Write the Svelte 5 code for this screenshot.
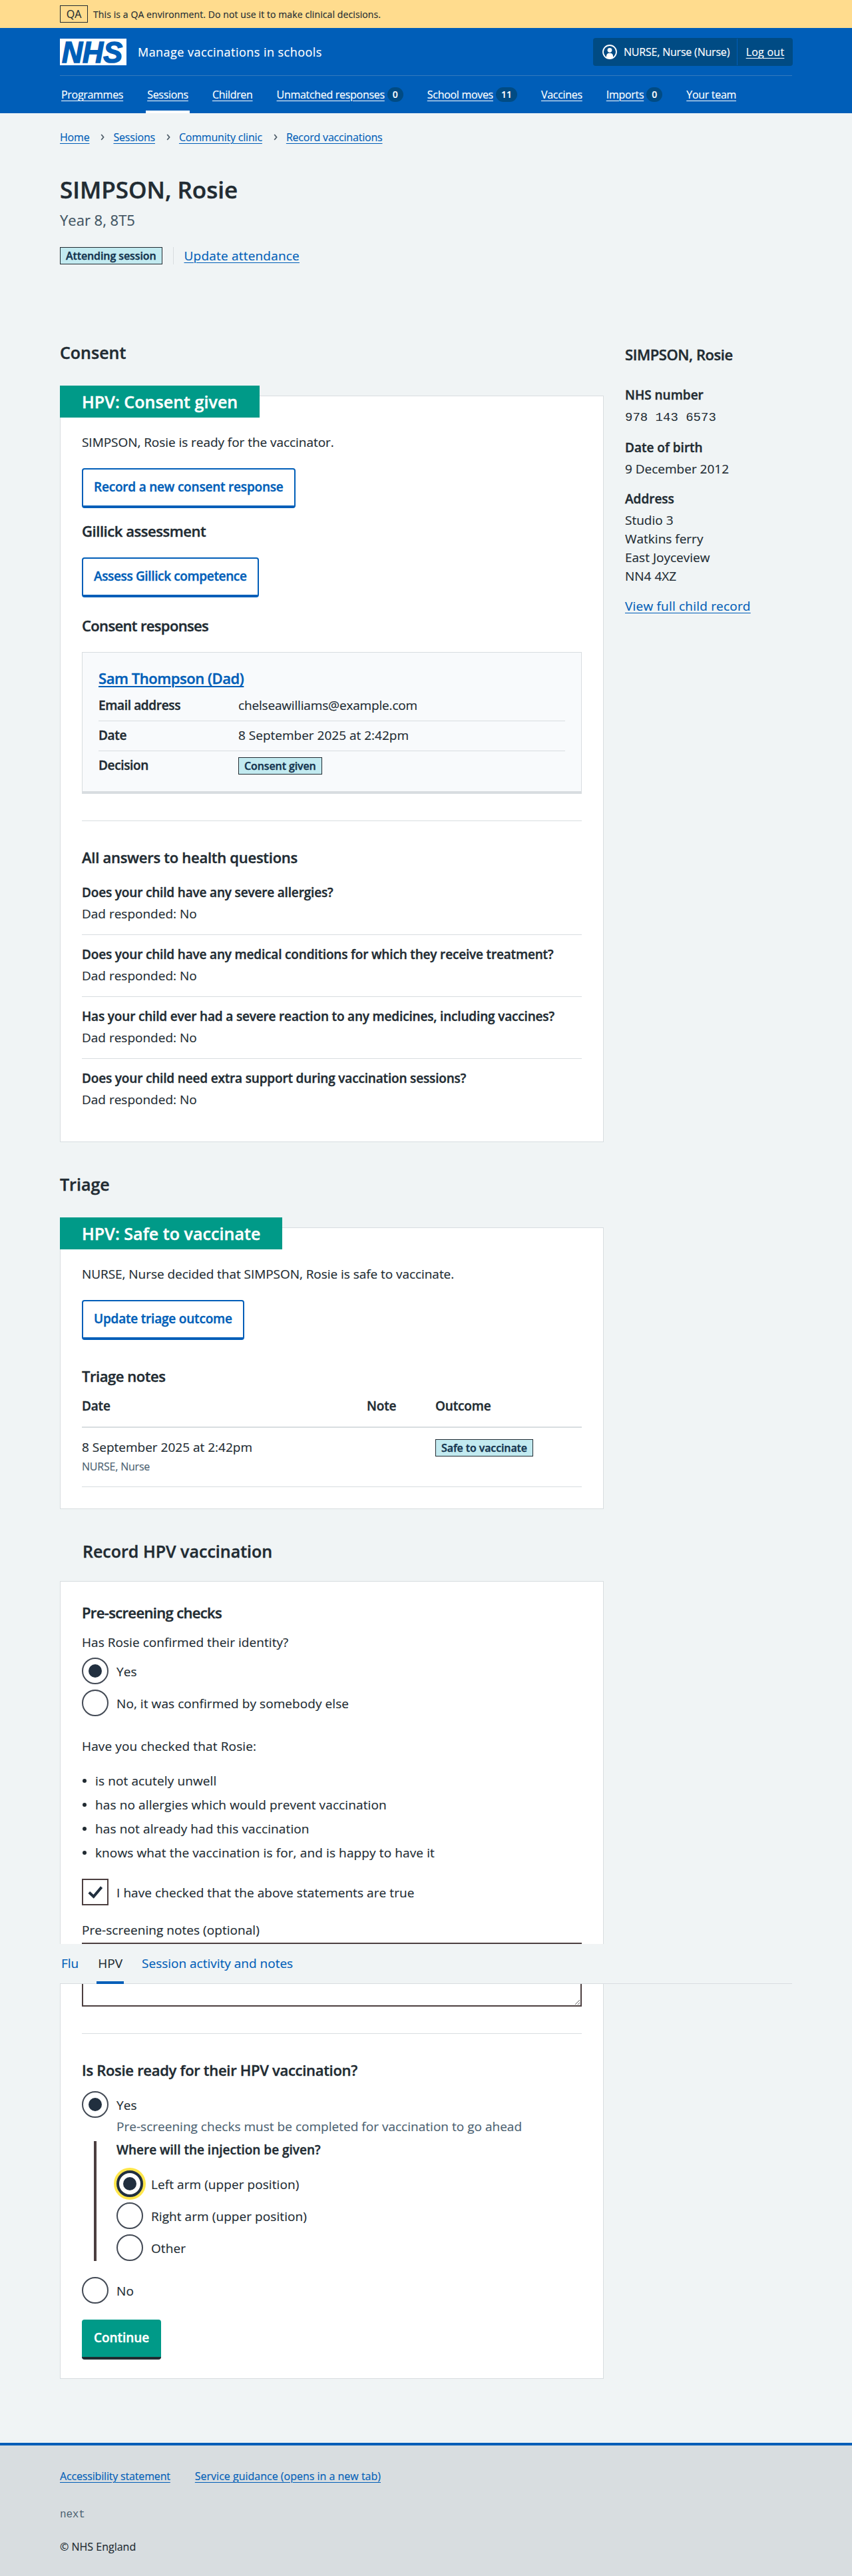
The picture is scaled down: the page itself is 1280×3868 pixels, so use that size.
<script>
  const nav = [
    { label: 'Programmes' },
    { label: 'Sessions', current: true },
    { label: 'Children' },
    { label: 'Unmatched responses', count: 0 },
    { label: 'School moves', count: 11 },
    { label: 'Vaccines' },
    { label: 'Imports', count: 0 },
    { label: 'Your team' }
  ];
  const crumbs = ['Home', 'Sessions', 'Community clinic', 'Record vaccinations'];
  const questions = [
    'Does your child have any severe allergies?',
    'Does your child have any medical conditions for which they receive treatment?',
    'Has your child ever had a severe reaction to any medicines, including vaccines?',
    'Does your child need extra support during vaccination sessions?'
  ];
  const checks = [
    'is not acutely unwell',
    'has no allergies which would prevent vaccination',
    'has not already had this vaccination',
    'knows what the vaccination is for, and is happy to have it'
  ];
  const address = ['Studio 3', 'Watkins ferry', 'East Joyceview', 'NN4 4XZ'];
</script>

{#snippet radio(label, checked = false, focused = false)}
  <label class="choice">
    <span class="radio" class:focused>{#if checked}<span class="dot"></span>{/if}</span>
    <span class="choice-label">{label}</span>
  </label>
{/snippet}

<div class="page">
  <div class="environment">
    <div class="container environment-row">
      <span class="environment-tag">QA</span>
      <span class="environment-text">This is a QA environment. Do not use it to make clinical decisions.</span>
    </div>
  </div>

  <header>
    <div class="container">
      <div class="masthead">
        <svg class="logo" viewBox="0 0 100 40" width="100" height="40" aria-label="NHS">
          <rect width="100" height="40" fill="#fff" />
          <text x="3" y="36" textLength="91" lengthAdjust="spacingAndGlyphs">NHS</text>
        </svg>
        <span class="service">Manage vaccinations in schools</span>
        <div class="account">
          <span class="user">
            <svg width="22" height="22" viewBox="0 0 22 22" fill="none">
              <circle cx="11" cy="11" r="10" stroke="#fff" stroke-width="1.8" />
              <circle cx="11" cy="8.3" r="3.4" fill="#fff" />
              <path d="M6 19.2V17a4.2 4.2 0 0 1 4.2-4.2h1.6A4.2 4.2 0 0 1 16 17v2.2a10 10 0 0 1-10 0z" fill="#fff" />
            </svg>
            NURSE, Nurse (Nurse)
          </span>
          <a class="logout" href="#logout">Log out</a>
        </div>
      </div>
      <nav class="primary">
        {#each nav as item}
          <div class="nav-item" class:current={item.current}>
            <a href="#nav">{item.label}</a>
            {#if item.count !== undefined}<span class="count">{item.count}</span>{/if}
          </div>
        {/each}
      </nav>
    </div>
  </header>

  <main class="container">
    <div class="breadcrumb">
      {#each crumbs as crumb, i}
        {#if i > 0}
          <svg class="chevron" width="6" height="10" viewBox="0 0 6 10"><path d="M1.2 1 4.6 5 1.2 9" fill="none" stroke="#4c5a66" stroke-width="1.7" /></svg>
        {/if}
        <a href="#crumb">{crumb}</a>
      {/each}
    </div>

    <h1>SIMPSON, Rosie</h1>
    <div class="caption">Year 8, 8T5</div>
    <div class="status">
      <span class="tag">Attending session</span>
      <span class="divider"></span>
      <a class="wide" href="#attendance">Update attendance</a>
    </div>

    <div class="columns">
      <div>
        <h2>Consent</h2>
        <section class="card">
          <h2 class="flag">HPV: Consent given</h2>
          <p class="lead">SIMPSON, Rosie is ready for the vaccinator.</p>
          <button class="secondary">Record a new consent response</button>
          <h3 class="after-button">Gillick assessment</h3>
          <button class="secondary tight">Assess Gillick competence</button>
          <h3 class="responses">Consent responses</h3>

          <div class="response">
            <h3><a href="#response">Sam Thompson (Dad)</a></h3>
            <dl>
              <div class="row"><dt>Email address</dt><dd class="narrow">chelseawilliams@example.com</dd></div>
              <div class="row"><dt>Date</dt><dd>8 September 2025 at 2:42pm</dd></div>
              <div class="row"><dt>Decision</dt><dd><span class="tag in-row">Consent given</span></dd></div>
            </dl>
          </div>

          <hr />
          <h3 class="after-rule answers">All answers to health questions</h3>
          <div class="questions">
            {#each questions as question}
              <div class="question">
                <strong>{question}</strong>
                <span>Dad responded: No</span>
              </div>
            {/each}
          </div>
        </section>

        <h2 class="next-section">Triage</h2>
        <section class="card triage">
          <h2 class="flag">HPV: Safe to vaccinate</h2>
          <p class="lead">NURSE, Nurse decided that SIMPSON, Rosie is safe to vaccinate.</p>
          <button class="secondary">Update triage outcome</button>
          <h3 class="after-rule">Triage notes</h3>
          <div class="notes-head">
            <strong>Date</strong><strong>Note</strong><strong>Outcome</strong>
          </div>
          <div class="notes-row">
            <div>
              <div>8 September 2025 at 2:42pm</div>
              <div class="author">NURSE, Nurse</div>
            </div>
            <div></div>
            <div><span class="tag in-row">Safe to vaccinate</span></div>
          </div>
        </section>

        <h2 class="next-section record">Record HPV vaccination</h2>
        <section class="card form">
          <h3 class="checks">Pre-screening checks</h3>
          <p class="identity">Has Rosie confirmed their identity?</p>
          <div class="choices">
            {@render radio('Yes', true)}
            {@render radio('No, it was confirmed by somebody else')}
          </div>
          <p class="checked-that">Have you checked that Rosie:</p>
          <ul>
            {#each checks as check}<li>{check}</li>{/each}
          </ul>
          <label class="choice confirm">
            <span class="checkbox">
              <svg width="24" height="20" viewBox="0 0 24 20"><path d="M2.8 10.6 9.6 16.8 21.6 2.6" fill="none" stroke="#212f3f" stroke-width="4" /></svg>
            </span>
            <span class="choice-label">I have checked that the above statements are true</span>
          </label>
          <label class="notes-label" for="notes">Pre-screening notes (optional)</label>
          <textarea id="notes"></textarea>
          <hr />
          <h3 class="after-rule ready">Is Rosie ready for their HPV vaccination?</h3>
          <div class="ready-choices">
            {@render radio('Yes', true)}
            <p class="hint">Pre-screening checks must be completed for vaccination to go ahead</p>
            <div class="conditional">
              <strong>Where will the injection be given?</strong>
              <div class="choices site">
                {@render radio('Left arm (upper position)', true, true)}
                {@render radio('Right arm (upper position)')}
                {@render radio('Other')}
              </div>
            </div>
            {@render radio('No')}
          </div>
          <button class="continue">Continue</button>
        </section>
      </div>

      <aside>
        <h3>SIMPSON, Rosie</h3>
        <strong class="first">NHS number</strong>
        <div class="number">978 143 6573</div>
        <strong>Date of birth</strong>
        <div class="value">9 December 2012</div>
        <strong>Address</strong>
        <div class="value">
          {#each address as line}<div>{line}</div>{/each}
        </div>
        <a class="wide" href="#record">View full child record</a>
      </aside>
    </div>

    
    <nav class="tabs">
      <a href="#flu">Flu</a>
      <a class="active" href="#hpv">HPV</a>
      <a href="#activity">Session activity and notes</a>
    </nav>
  </main>

  <footer>
    <div class="container">
      <div class="footer-links">
        <a class="narrow" href="#accessibility">Accessibility statement</a>
        <a href="#guidance">Service guidance (opens in a new tab)</a>
      </div>
      <div class="version">next</div>
      <div class="copyright">© NHS England</div>
    </div>
  </footer>
</div>

<style>
  :global(body) { margin: 0; background: #f0f4f5; }
  .page {
    position: relative;
    font: 400 19px/28px 'Open Sans', 'Noto Sans', sans-serif;
    color: #212b32;
    background: #f0f4f5;
    -webkit-text-stroke: 0.15px;
  }
  .page :global(*) { box-sizing: border-box; }
  .container { width: 1100px; margin: 0 auto; }
  h1, h2, h3, strong, dt, button, .tag { -webkit-text-stroke: 0.4px; }
  h1, h2, h3, p, ul, dl, dd { margin: 0; padding: 0; }
  h1 { margin-top: 45px; font-size: 35px; line-height: 44px; font-weight: 600; }
  h2 { font-size: 25px; line-height: 32px; font-weight: 600; }
  h3 { font-size: 22px; line-height: 28px; font-weight: 600; letter-spacing: -0.45px; }
  strong, dt { display: block; font-weight: 600; letter-spacing: -0.17px; }
  a { color: #005eb8; text-decoration: underline; text-decoration-thickness: 1px; text-underline-offset: 3px; }
  .wide { letter-spacing: 0.2px; }
  .narrow { letter-spacing: -0.17px; }
  hr { height: 1px; margin: 40px 0 0; border: 0; background: #d8dde0; }

  .environment { height: 42px; background: #ffdc8e; }
  .environment-row { display: flex; align-items: center; height: 42px; gap: 8px; }
  .environment-tag {
    display: flex; align-items: center; justify-content: center;
    width: 42px; height: 26px;
    border: 1px solid #212b32;
    font-size: 16px;
  }
  .environment-text { padding-top: 1px; font-size: 14px; letter-spacing: 0.1px; }

  header { height: 128px; background: #005eb8; color: #fff; font-size: 16px; }
  header a { color: #fff; }
  .masthead { display: flex; align-items: center; height: 72px; border-bottom: 1px solid #3379bd; padding-top: 1px; }
  .logo { overflow: visible; }
  .logo text {
    font: italic 700 44px/1 'Liberation Sans', Arial, sans-serif;
    fill: #005eb8; stroke: #005eb8; stroke-width: 1.6;
  }
  .service { margin: -1px auto 0 17px; font-size: 18px; letter-spacing: 0.46px; }
  .account {
    display: flex; width: 300px; height: 42px; margin-right: -1px; padding: 1px 0;
    border-radius: 4px; background: #004b84; letter-spacing: -0.2px;
  }
  .user { display: flex; align-items: center; gap: 10px; width: 217px; padding-left: 14px; border-right: 1px solid #005eb8; }
  .logout { margin: auto; letter-spacing: 0.25px; }
  .primary { display: flex; gap: 36px; height: 56px; padding-left: 2px; letter-spacing: -0.3px; }
  .nav-item { position: relative; display: flex; align-items: center; gap: 4px; }
  .nav-item.current::after { content: ''; position: absolute; left: -2px; right: -2px; bottom: 0; height: 4px; background: #fff; }
  .count {
    min-width: 24px; height: 22px; padding: 0 8px; border-radius: 11px;
    background: #004b84; font-size: 14px; font-weight: 600; line-height: 22px; letter-spacing: 0; text-align: center;
  }

  main { padding-top: 24px; }
  .breadcrumb { display: flex; align-items: center; height: 24px; font-size: 16px; line-height: 24px; letter-spacing: -0.2px; }
  .chevron { margin: 0 13px 0 17px; }
  .caption { margin-top: 7px; font-size: 22px; line-height: 32px; color: #425563; }
  .status { display: flex; align-items: center; height: 26px; margin-top: 25px; }
  .divider { width: 1px; height: 26px; margin: 0 16px; background: #d8dde0; }
  .tag {
    display: inline-block; height: 26px; padding: 0 8px;
    border: 1px solid #212b32; background: #c2eaf0; color: #14344f;
    font-size: 16px; font-weight: 600; line-height: 24px; letter-spacing: -0.1px;
  }
  .tag.in-row { display: block; width: max-content; margin-top: 2px; }

  .columns { display: grid; grid-template-columns: 817px 1fr; gap: 32px; margin-top: 116px; }
  .card { margin-top: 49px; padding: 0 32px 31px; border: 1px solid #d8dde0; background: #fff; }
  .flag { width: max-content; height: 48px; margin: -16px 0 0 -33px; padding: 0 33px; background: #009a88; color: #fff; line-height: 48px; letter-spacing: 0.05px; }
  .lead { margin-top: 23px; letter-spacing: -0.05px; }
  button { display: block; font: inherit; font-weight: 600; letter-spacing: -0.2px; height: 60px; padding: 0 16px 3px; border-radius: 4px; }
  .secondary { margin-top: 25px; border: 2px solid #005eb8; border-bottom-width: 4px; background: #fff; color: #005eb8; letter-spacing: -0.2px; }
  .secondary.tight { margin-top: 26px; letter-spacing: -0.36px; }
  .after-button { margin-top: 20px; }
  .responses { margin-top: 28px; letter-spacing: -0.65px; }
  .answers { letter-spacing: -0.27px; }
  .ready { letter-spacing: -0.3px; }
  .after-rule { margin-top: 40px; }

  .response { height: 213px; margin-top: 26px; padding: 24px 24px 0; border: 1px solid #d8dde0; border-bottom-width: 4px; background: #f8fafc; }
  .response a { text-decoration-thickness: 2px; }
  dl { margin-top: 6px; }
  .row { display: grid; grid-template-columns: 210px 1fr; height: 45px; padding-top: 7px; border-bottom: 1px solid #d8dde0; }
  .row:last-child { border: 0; }
  dt { letter-spacing: -0.35px; }

  .questions { margin-top: 10px; }
  .question { display: flex; flex-direction: column; gap: 4px; height: 93px; padding-top: 15px; border-bottom: 1px solid #d8dde0; }
  .question:last-child { border-color: transparent; }
  .next-section { margin-top: 47px; }

  .triage { padding-bottom: 32px; }
  .notes-head, .notes-row { display: grid; grid-template-columns: 428px 103px 1fr; }
  .notes-head { height: 47px; margin-top: 17px; border-bottom: 2px solid #d8dde0; }
  .notes-row { height: 89px; padding-top: 15px; border-bottom: 1px solid #d8dde0; }
  .author { margin-top: 3px; font-size: 16px; line-height: 24px; letter-spacing: -0.2px; color: #4c6272; }

  .record { padding-left: 34px; }
  .form { margin-top: 29px; padding: 32px 32px 28px; }
  .checks { letter-spacing: -0.65px; }
  .identity { margin-top: 17px; letter-spacing: 0.05px; }
  .choices { display: grid; gap: 8px; margin-top: 9px; }
  .choice { display: flex; align-items: center; gap: 12px; height: 40px; }
  .choice-label { padding-top: 1px; letter-spacing: 0.07px; }
  .radio, .checkbox { display: flex; align-items: center; justify-content: center; width: 40px; height: 40px; background: #fff; }
  .radio { border: 2px solid #434a55; border-radius: 50%; }
  .dot { width: 20px; height: 20px; border-radius: 50%; background: #212f3f; }
  .radio.focused { border: 4px solid #212f3f; box-shadow: 0 0 0 4px #ffe64b; }
  .checkbox { border: 2px solid #4c3f40; }
  .checked-that { margin-top: 31px; letter-spacing: 0.14px; }
  ul { display: grid; gap: 8px; margin-top: 24px; list-style: none; letter-spacing: 0.12px; }
  li { display: flex; align-items: center; gap: 13px; padding-left: 1px; }
  li::before { content: ''; width: 6px; height: 6px; border-radius: 50%; background: #212b32; }
  .confirm { margin-top: 25px; }
  .notes-label { display: block; margin-top: 23px; letter-spacing: 0.05px; }
  textarea { display: block; width: 100%; height: 96px; margin: 5px 0 0; border: 2px solid #4c3f40; border-radius: 0; background: #fff; resize: vertical; }
  .ready-choices { margin-top: 18px; }
  .hint { margin: -1px 0 0 52px; letter-spacing: 0.02px; color: #4c6272; }
  .conditional { height: 180px; margin: 8px 0 24px 18px; padding-left: 30px; border-left: 4px solid #4c3f40; }
  .conditional strong { position: relative; top: -1px; letter-spacing: 0; }
  .site { margin-top: 16px; }
  .continue { margin-top: 24px; padding: 0 18px 3px; border: 0; border-bottom: 4px solid #212b32; background: #009a88; color: #fff; letter-spacing: -0.05px; }

  aside { padding-top: 5px; }
  aside strong { margin-top: 17px; letter-spacing: 0; }
  aside strong.first { margin-top: 33px; }
  .number { margin-top: 6px; font-family: 'Liberation Mono', monospace; -webkit-text-stroke: 0; }
  .value { margin-top: 4px; }
  aside a { display: inline-block; margin-top: 17px; }

  .tabs {
    position: absolute; top: 2919px; z-index: 1;
    display: flex; gap: 25px; width: 1100px; height: 60px;
    border-bottom: 1px solid #d8dde0; background: #f0f4f5;
  }
  .tabs a { height: 60px; padding: 15px 2px 0; text-decoration: none; }
  .tabs .active { border-bottom: 4px solid #005eb8; color: #212b32; }

  footer { height: 200px; margin-top: 96px; padding-top: 34px; border-top: 4px solid #005eb8; background: #d8dde0; font-size: 16px; line-height: 24px; }
  .footer-links { display: flex; gap: 37px; }
  .version { margin-top: 34px; font-family: 'Liberation Mono', monospace; letter-spacing: -0.2px; color: #4c6272; -webkit-text-stroke: 0; }
  .copyright { margin-top: 24px; }
</style>
